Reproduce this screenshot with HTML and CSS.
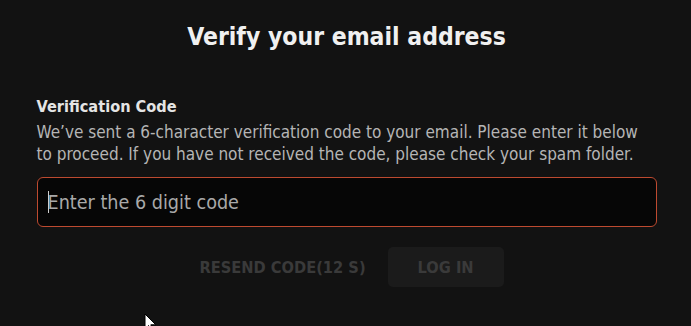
FILE: index.html
```html
<!DOCTYPE html>
<html>
<head>
<meta charset="utf-8">
<link rel="stylesheet" href="styles.css">
</head>
<body>
<main class="page">
  <h1 class="title">Verify your email address</h1>
  <section class="form">
    <label class="label" for="code">Verification Code</label>
    <p class="desc">We’ve sent a 6-character verification code to your email. Please enter it below to proceed. If you have not received the code, please check your spam folder.</p>
    <div class="input-box">
      <span class="caret"></span>
      <input id="code" class="input" type="text" placeholder="Enter the 6 digit code">
    </div>
    <div class="actions">
      <button class="btn btn-resend">RESEND CODE(12 S)</button>
      <button class="btn btn-login">LOG IN</button>
    </div>
  </section>
</main>
<svg class="cursor" width="14" height="20" viewBox="0 0 14 20"><path d="M1 1 L1 16 L4.5 12.5 L7 18.5 L9.2 17.6 L6.8 11.8 L11.8 11.8 Z" fill="#fff" stroke="#000" stroke-width="1"/></svg>
</body>
</html>
```
FILE: styles.css
```css
html, body {
  margin: 0;
  padding: 0;
  background: #121212;
  height: 100%;
  overflow: hidden;
}
body {
  font-family: "DejaVu Sans Condensed", "DejaVu Sans", sans-serif;
  color: #e6e6e6;
  position: relative;
}
.page {
  width: 620px;
  margin: 0 auto;
  padding-top: 20px;
  transform: translateX(1px);
}
.title {
  margin: 0;
  text-align: center;
  font-size: 24.5px;
  line-height: 34px;
  font-weight: bold;
  color: #f0f0f0;
}
.form {
  margin-top: 41px;
  display: flex;
  flex-direction: column;
}
.label {
  font-size: 16.2px;
  font-weight: bold;
  line-height: 22px;
  color: #e4e4e4;
  margin-top: 1px;
}
.desc {
  margin: 3px 0 0;
  font-size: 17px;
  line-height: 22px;
  color: #b5b5b5;
}
.input-box {
  margin-top: 12px;
  height: 48px;
  border: 1px solid #bd4a30;
  border-radius: 6px;
  background: #060606;
  display: flex;
  align-items: center;
  padding-left: 10px;
  position: relative;
}
.caret {
  width: 1px;
  height: 22px;
  background: #cfcfcf;
  position: absolute;
  left: 10px;
  top: 13px;
}
.input {
  flex: 1;
  background: transparent;
  border: none;
  outline: none;
  font-family: inherit;
  font-size: 19.6px;
  color: #ddd;
  padding: 0;
}
.input::placeholder {
  color: #a9a9a9;
}
.actions {
  margin-top: 20px;
  display: flex;
  justify-content: center;
  gap: 20px;
  padding-left: 8px;
}
.btn {
  font-family: inherit;
  font-weight: bold;
  font-size: 16.3px;
  height: 40px;
  border: none;
  border-radius: 5px;
  color: #3a3a3a;
  cursor: pointer;
}
.btn-resend {
  background: transparent;
  padding: 0 2px;
}
.btn-login {
  background: #1b1b1b;
  width: 116px;
}
.cursor {
  position: absolute;
  left: 144px;
  top: 313px;
}
```
